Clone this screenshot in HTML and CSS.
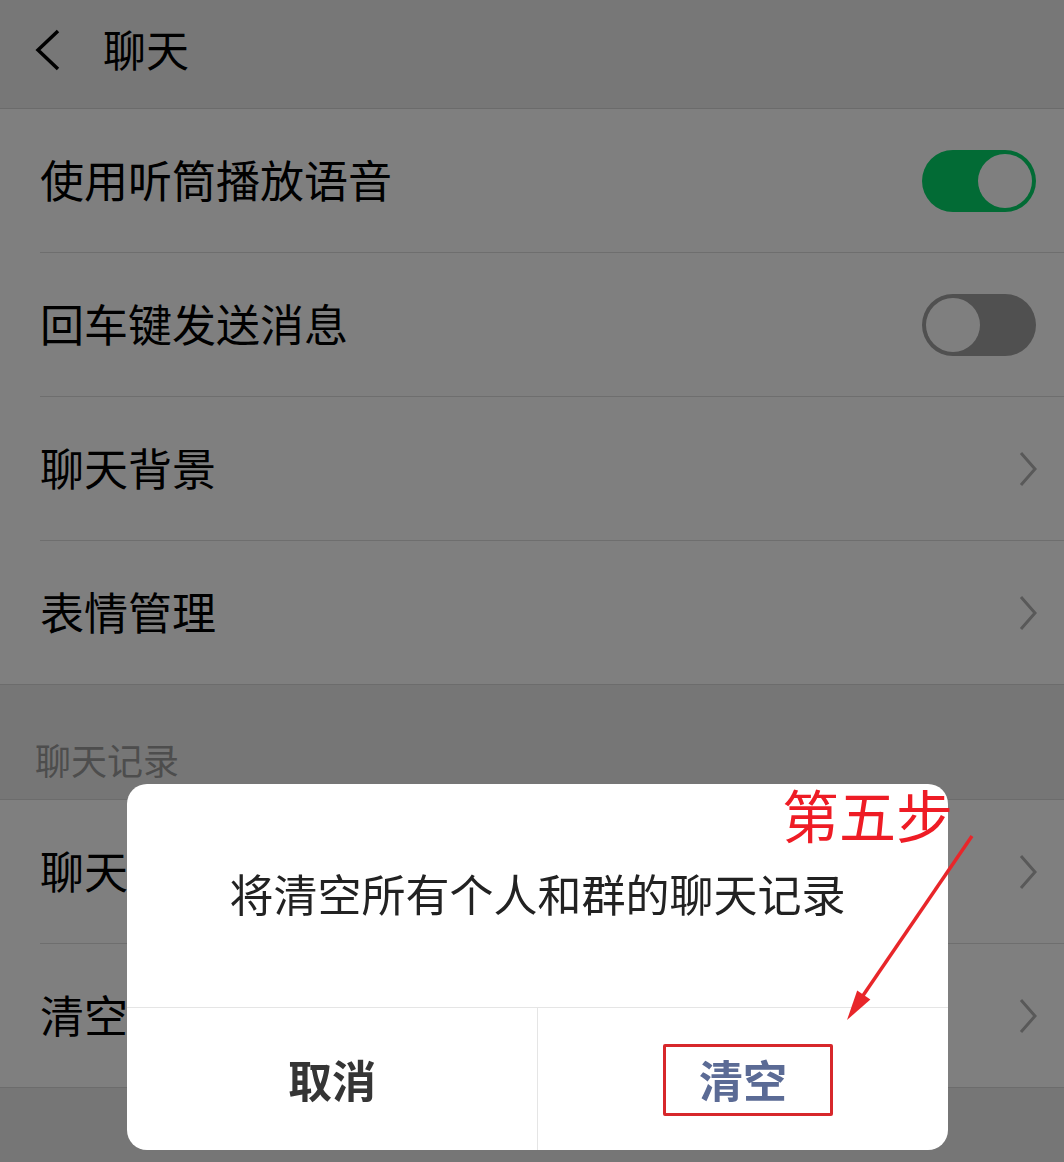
FILE: index.html
```html
<!DOCTYPE html>
<html>
<head>
  <title>聊天</title>
  <link rel="stylesheet" href="styles.css">
</head>
<body>
  <div class="page">
    <div class="topbar">
      <svg class="back" width="28" height="42" viewBox="0 0 28 42"><polyline points="24,2 4,21 24,40" fill="none" stroke="#000" stroke-width="3.5"/></svg>
      <h1>聊天</h1>
    </div>

    <div class="group">
      <div class="cell">
        <span class="label">使用听筒播放语音</span>
        <span class="switch on"></span>
      </div>
      <div class="cell">
        <span class="label">回车键发送消息</span>
        <span class="switch"></span>
      </div>
      <div class="cell">
        <span class="label">聊天背景</span>
        <svg class="arrow-right" width="20" height="38" viewBox="0 0 20 38"><polyline points="3,3 17,19 3,35" fill="none" stroke="#b2b2b2" stroke-width="3"/></svg>
      </div>
      <div class="cell">
        <span class="label">表情管理</span>
        <svg class="arrow-right" width="20" height="38" viewBox="0 0 20 38"><polyline points="3,3 17,19 3,35" fill="none" stroke="#b2b2b2" stroke-width="3"/></svg>
      </div>
    </div>

    <div class="section-title">聊天记录</div>

    <div class="group">
      <div class="cell">
        <span class="label">聊天记录迁移</span>
        <svg class="arrow-right" width="20" height="38" viewBox="0 0 20 38"><polyline points="3,3 17,19 3,35" fill="none" stroke="#b2b2b2" stroke-width="3"/></svg>
      </div>
      <div class="cell">
        <span class="label">清空聊天记录</span>
        <svg class="arrow-right" width="20" height="38" viewBox="0 0 20 38"><polyline points="3,3 17,19 3,35" fill="none" stroke="#b2b2b2" stroke-width="3"/></svg>
      </div>
    </div>
  </div>

  <div class="mask"></div>

  <div class="dialog">
    <div class="dialog-body">将清空所有个人和群的聊天记录</div>
    <div class="dialog-buttons">
      <div class="dialog-btn cancel">取消</div>
      <div class="dialog-btn confirm">清空</div>
    </div>
  </div>

  <!-- 标注 -->
  <div class="mark-box"></div>
  <div class="mark-text">第五步</div>
  <svg class="mark-arrow" width="1064" height="1162" viewBox="0 0 1064 1162">
    <line x1="972" y1="836" x2="862" y2="997" stroke="#e8262a" stroke-width="3.5"/>
    <polygon points="847,1020 870.4,999.6 857.2,990.6" fill="#e8262a"/>
  </svg>
</body>
</html>
```

FILE: styles.css
```css
body {
  margin: 0;
  width: 1064px;
  height: 1162px;
  overflow: hidden;
  background-color: #ededed;
  font-family: "Noto Sans CJK SC", sans-serif;
}

.topbar {
  display: flex;
  align-items: center;
  height: 96px;
  padding-bottom: 12px;
  background-color: #eeeeee;
  border-bottom: 1px solid #d6d6d6;
}

.topbar .back {
  margin-left: 34px;
  margin-top: 4px;
}

.topbar h1 {
  margin: 0 0 0 41px;
  font-size: 43px;
  font-weight: 400;
  color: #000;
  line-height: 1;
}

.group {
  background-color: #ffffff;
  border-bottom: 1px solid #d9d9d9;
}

.section-title + .group {
  border-top: 1px solid #d9d9d9;
}

.cell {
  display: flex;
  align-items: center;
  justify-content: space-between;
  height: 143px;
  margin-left: 40px;
  padding-right: 28px;
  border-bottom: 1px solid #dcdcdc;
}

.cell:last-child {
  border-bottom: none;
}

.label {
  font-size: 44px;
  color: #000;
  line-height: 1;
  white-space: nowrap;
  margin-top: -4px;
}

.switch {
  position: relative;
  width: 114px;
  height: 62px;
  border-radius: 31px;
  background-color: #a0a0a0;
  flex-shrink: 0;
}

.switch::after {
  content: "";
  position: absolute;
  top: 4px;
  left: 4px;
  width: 54px;
  height: 54px;
  border-radius: 50%;
  background-color: #ffffff;
}

.switch.on {
  background-color: #04d66a;
}

.switch.on::after {
  left: auto;
  right: 4px;
}

.arrow-right {
  margin-right: -2px;
}

.section-title {
  height: 62px;
  padding: 43px 0 9px 35px;
  font-size: 36px;
  line-height: 62px;
  color: #9a9a9a;
}

/* 遮罩和对话框 */
.mask {
  position: fixed;
  top: 0;
  left: 0;
  right: 0;
  bottom: 0;
  background-color: rgba(0, 0, 0, 0.5);
}

.dialog {
  position: fixed;
  left: 127px;
  top: 784px;
  width: 821px;
  height: 366px;
  background-color: #ffffff;
  border-radius: 20px;
  display: flex;
  flex-direction: column;
  overflow: hidden;
}

.dialog-body {
  height: 218px;
  padding-bottom: 5px;
  display: flex;
  align-items: center;
  justify-content: center;
  font-size: 44px;
  color: #222;
  border-bottom: 1px solid #e5e5e5;
}

.dialog-buttons {
  flex: 1;
  display: flex;
}

.dialog-btn {
  flex: 1;
  display: flex;
  align-items: center;
  justify-content: center;
  font-size: 44px;
  font-weight: 700;
}

.cancel {
  color: #353535;
  border-right: 1px solid #e5e5e5;
}

.confirm {
  color: #5b6b95;
}

.mark-box {
  position: fixed;
  left: 663px;
  top: 1044px;
  width: 164px;
  height: 66px;
  border: 3px solid #d7272b;
  border-radius: 2px;
}

.mark-text {
  position: fixed;
  left: 782px;
  top: 780px;
  font-size: 57px;
  line-height: 66px;
  color: #ee1c25;
  white-space: nowrap;
}

.mark-arrow {
  position: fixed;
  top: 0;
  left: 0;
  pointer-events: none;
}
```
